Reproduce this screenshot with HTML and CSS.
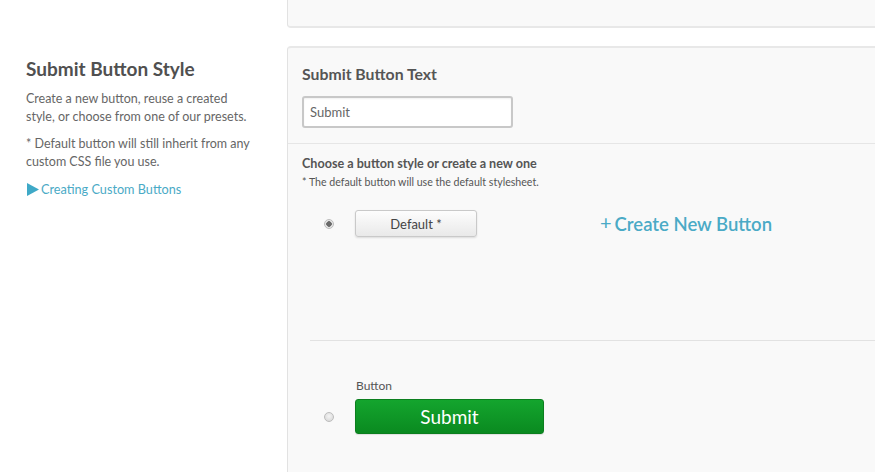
FILE: index.html
```html
<!DOCTYPE html>
<html>
<head>
<meta charset="utf-8">
<link rel="stylesheet" href="styles.css">
</head>
<body>
<div class="page">
  <aside class="side">
    <h2 class="side-title">Submit Button Style</h2>
    <p class="side-text">Create a new button, reuse a created style, or choose from one of our presets.</p>
    <p class="side-text">* Default button will still inherit from any custom CSS file you use.</p>
    <a class="side-link" href="#"><svg class="tri" width="12" height="13" viewBox="0 0 12 13"><path d="M0 0 L12 6.5 L0 13 Z" fill="#3fa9c7"/></svg>Creating Custom Buttons</a>
  </aside>
  <main class="main">
    <div class="panel-top"></div>
    <div class="panel">
      <section class="sec-text">
        <h3 class="sec-title">Submit Button Text</h3>
        <input class="text-input" type="text" value="Submit">
      </section>
      <section class="sec-style">
        <h4 class="style-title">Choose a button style or create a new one</h4>
        <p class="style-note">* The default button will use the default stylesheet.</p>
        <div class="opt-row">
          <span class="radio checked"></span>
          <button class="btn-default">Default *</button>
          <a class="create-link" href="#"><span class="plus">+</span>Create New Button</a>
        </div>
        <div class="divider"></div>
        <div class="opt-block">
          <div class="opt-label">Button</div>
          <div class="opt-row2">
            <span class="radio"></span>
            <button class="btn-green">Submit</button>
          </div>
        </div>
      </section>
    </div>
  </main>
</div>
</body>
</html>
```
FILE: styles.css
```css
* { box-sizing: border-box; }
html, body { margin: 0; padding: 0; background: #fff; }
body { font-family: Lato, "Open Sans", "Liberation Sans", sans-serif; color: #555; width: 875px; height: 472px; overflow: hidden; }
.page { display: flex; height: 472px; }
.side { width: 287px; flex: none; padding: 57px 33px 0 26px; }
.side-title { margin: 0 0 10px; font-size: 19px; line-height: 23px; font-weight: 700; color: #505050; }
.side-text { margin: 0 0 9px; font-size: 12.5px; line-height: 18px; color: #666; }
.side-link { display: flex; align-items: center; font-size: 12.7px; line-height: 18px; color: #4aaac6; text-decoration: none; margin-top: 9px; }
.tri { margin: 0 2px 0 1px; }
.main { flex: 1; display: flex; flex-direction: column; min-width: 0; }
.panel-top { height: 28px; background: #f9f9f9; border-left: 1px solid #e2e2e2; border-bottom: 2px solid #e8e8e8; border-bottom-left-radius: 4px; }
.panel { margin-top: 18px; flex: 1; background: #f9f9f9; border-left: 1px solid #e2e2e2; border-top: 2px solid #e8e8e8; border-top-left-radius: 4px; }
.sec-text { padding: 17px 0 15px 14px; border-bottom: 1px solid #e6e6e6; }
.sec-title { margin: 0 0 13px; font-size: 15.8px; line-height: 18px; font-weight: 700; color: #555; }
.text-input { display: block; width: 211px; height: 32px; border: 2px solid #c8c8c8; border-radius: 3px; background: #fff; font-family: inherit; font-size: 13px; color: #666; padding: 0 6px; outline: none; box-shadow: inset 0 1px 2px rgba(0,0,0,0.06); }
.sec-style { padding: 12px 0 0 0; }
.style-title { margin: 0 0 4px 14px; font-size: 12.6px; line-height: 16px; font-weight: 700; color: #555; }
.style-note { margin: 0 0 0 14px; font-size: 10.6px; line-height: 12px; color: #555; }
.opt-row { display: flex; align-items: center; margin-top: 22px; padding-left: 36px; }
.radio { flex: none; width: 10px; height: 10px; border-radius: 50%; background: radial-gradient(circle at 50% 40%, #f4f4f4, #d4d4d4); border: 1px solid #bdbdbd; }
.radio.checked { background: radial-gradient(circle, #6a6a6a 0 2.5px, #e6e6e6 3px); }
.btn-default { margin-left: 21px; width: 122px; height: 27px; border: 1px solid #c9c9c9; border-radius: 3px; background: linear-gradient(#fdfdfd, #e9e9e9); box-shadow: 0 1px 2px rgba(0,0,0,0.12); font-family: inherit; font-size: 13px; color: #444; padding: 0; }
.create-link { margin-left: 123px; font-size: 18.5px; line-height: 22px; font-weight: 600; color: #4aaac6; text-decoration: none; display: flex; align-items: center; }
.plus { font-size: 20px; margin-right: 3px; position: relative; top: -2px; font-weight: 400; }
.divider { margin: 103px 0 0 22px; border-top: 1px solid #e2e2e2; }
.opt-block { padding-left: 36px; margin-top: 37px; }
.opt-label { margin-left: 32px; font-size: 12px; line-height: 15px; color: #555; margin-bottom: 6px; }
.opt-row2 { display: flex; align-items: center; }
.btn-green { margin-left: 21px; width: 189px; height: 35px; border: 1px solid #0c7f1f; border-radius: 3px; background: linear-gradient(#14a52e, #0a8a20); box-shadow: 0 1px 1px rgba(0,0,0,0.1); font-family: inherit; font-size: 19px; color: #fff; padding: 0; }
```
